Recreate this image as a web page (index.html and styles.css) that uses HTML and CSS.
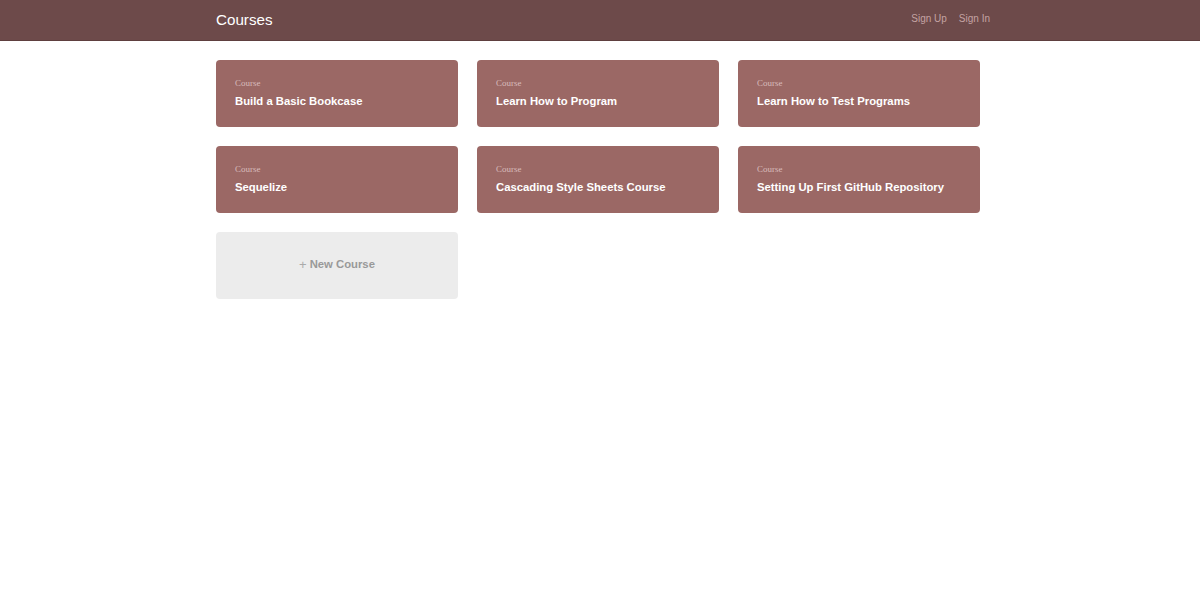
FILE: index.html
```html
<!DOCTYPE html>
<html>
<head>
<meta charset="utf-8">
<title>Courses</title>
<link rel="stylesheet" href="styles.css">
</head>
<body>
<header class="header">
  <div class="bounds header-inner">
    <h1 class="logo">Courses</h1>
    <nav class="nav">
      <a href="#">Sign Up</a>
      <a href="#">Sign In</a>
    </nav>
  </div>
</header>
<main class="bounds grid">
  <a class="card" href="#"><span class="label">Course</span><span class="title">Build a Basic Bookcase</span></a>
  <a class="card" href="#"><span class="label">Course</span><span class="title">Learn How to Program</span></a>
  <a class="card" href="#"><span class="label">Course</span><span class="title">Learn How to Test Programs</span></a>
  <a class="card" href="#"><span class="label">Course</span><span class="title">Sequelize</span></a>
  <a class="card" href="#"><span class="label">Course</span><span class="title">Cascading Style Sheets Course</span></a>
  <a class="card" href="#"><span class="label">Course</span><span class="title">Setting Up First GitHub Repository</span></a>
  <a class="card card-add" href="#"><span class="plus">+</span> New Course</a>
</main>
</body>
</html>
```

FILE: styles.css
```css
* { box-sizing: border-box; }
body {
  margin: 0;
  font-family: "Liberation Sans", Arial, sans-serif;
  background: #fff;
}
.bounds {
  width: 768px;
  margin: 0 auto;
}
.header {
  background: #6d4a4a;
  height: 41px;
  border-bottom: 1px solid #5e3f3f;
}
.header-inner {
  display: flex;
  align-items: center;
  justify-content: space-between;
  height: 40px;
}
.logo {
  margin: -2px 0 0;
  font-size: 15.2px;
  font-weight: normal;
  color: #fff;
}
.nav {
  display: flex;
  gap: 12px;
  margin-right: -6px;
  margin-top: -4px;
}
.nav a {
  color: #c4a3a3;
  font-size: 10px;
  text-decoration: none;
}
.grid {
  display: grid;
  grid-template-columns: repeat(3, 242px);
  column-gap: 19px;
  row-gap: 19px;
  padding-top: 19px;
}
.card {
  display: flex;
  flex-direction: column;
  height: 67px;
  padding: 18px 19px 0;
  background: #9b6865;
  border-radius: 4px;
  text-decoration: none;
}
.label {
  font-family: "Liberation Serif", "Times New Roman", serif;
  font-size: 9px;
  color: #d8bcbc;
  line-height: 10px;
}
.title {
  margin-top: 6px;
  font-size: 11.3px;
  font-weight: bold;
  color: #fff;
  line-height: 14px;
}
.card-add {
  flex-direction: row;
  align-items: center;
  justify-content: center;
  padding: 0 0 3px;
  background: #ececec;
  color: #999;
  font-size: 11.3px;
  font-weight: bold;
}
.plus {
  font-weight: normal;
  font-size: 13px;
  margin-right: 3px;
  color: #aaa;
}
```
